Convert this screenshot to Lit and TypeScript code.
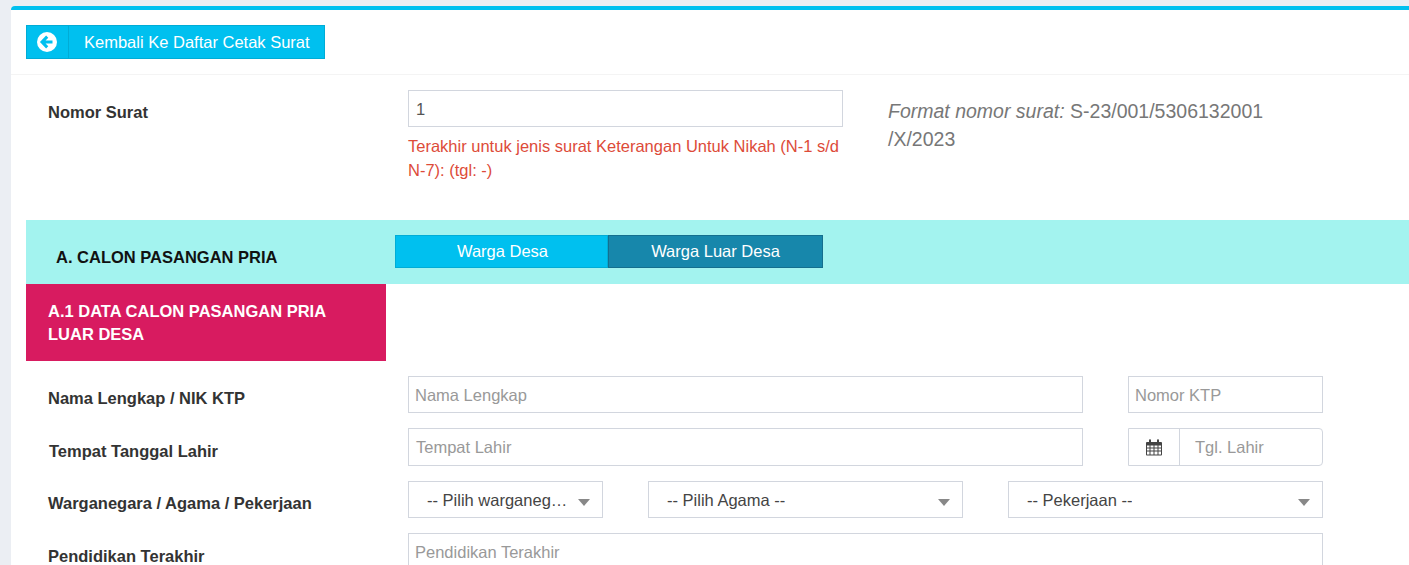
import { LitElement, html, css } from "lit";
import { customElement } from "lit/decorators.js";

const caret = html`<span class="caret"></span>`;

@customElement("app-root")
export class AppRoot extends LitElement {
  static styles = css`
    :host { display: block; height: 565px; overflow: hidden; background: #ebeef3; font: 16.5px/1.4 "Liberation Sans", Arial, sans-serif; color: #333; }
    * { box-sizing: border-box; }
    .card { margin: 6px 0 0 11px; background: #fff; border-top: 4px solid #00c0ef; border-top-left-radius: 4px; height: 559px; overflow: hidden; }
    .head { height: 65px; padding: 15px 15px 0; border-bottom: 1px solid #f4f4f4; }
    .back { display: inline-flex; height: 34px; width: 299px; background: #00c0ef; border: 1px solid #00acd6; color: #fff; align-items: center; }
    .back .ic { width: 42px; height: 100%; display: flex; align-items: center; justify-content: center; border-right: 1px solid #00acd6; padding-right: 1px; }
    .back .tx { padding: 1px 0 0 15px; }
    .nomor { display: grid; grid-template-columns: 360px 435px 1fr; padding: 15px 0 0 37px; height: 145px; }
    .nomor .lbl { padding-top: 11px; }
    .lbl { font-weight: 700; color: #333; line-height: 22px; }
    .inp { height: 37px; border: 1px solid #d2d6de; padding: 2px 6px 0; display: flex; align-items: center; color: #999; background: #fff; white-space: nowrap; overflow: hidden; }
    .inp.val { color: #555; padding-left: 7px; }
    .err { color: #dd4b39; line-height: 24px; margin-top: 7px; }
    .hint { margin-left: 45px; font-size: 19.5px; line-height: 28px; color: #777; padding-top: 7px; width: 400px; }
    .band { margin-left: 15px; height: 64px; background: #a3f3ef; display: flex; }
    .band .title { width: 369px; padding: 25px 0 0 30px; font-weight: 700; color: #111; line-height: 24px; }
    .seg { display: flex; height: 33px; margin-top: 15px; color: #fff; }
    .seg div { display: flex; align-items: center; justify-content: center; border: 1px solid #00acd6; background: #00c0ef; width: 213px; padding: 0 0 0 2px; }
    .seg div + div { width: 215px; background: #1787ab; border-color: #146f8e; padding: 0; }
    .pink { margin-left: 15px; width: 360px; height: 77px; background: #d81b60; color: #fff; font-weight: 700; line-height: 23px; padding: 16px 22px 0; }
    .rows { padding: 15px 0 0 37px; display: flex; flex-direction: column; }
    .row { display: flex; align-items: flex-start; }
    .row .lbl { width: 360px; flex: none; padding-top: 11px; }
    .f { flex: none; }
    .r1 { height: 52px; }
    .r2 { height: 53px; }
    .r2 .lbl { padding: 12px 0 0 1px; }
    .r3 { height: 52px; }
    .r4 .lbl { padding-top: 12px; }
    .ig { width: 195px; height: 38px; margin-left: 45px; border: 1px solid #d2d6de; border-radius: 0 4px 4px 0; display: flex; color: #999; }
    .ig .cal { width: 51px; display: flex; align-items: center; justify-content: center; border-right: 1px solid #d2d6de; }
    .ig .ph { padding: 2px 0 0 15px; display: flex; align-items: center; }
    .sel { height: 37px; border: 1px solid #d2d6de; display: flex; align-items: center; color: #444; position: relative; padding: 2px 32px 0 18px; white-space: nowrap; margin-left: 45px; }
    .sel.first { margin-left: 0; }
    .sel .t { overflow: hidden; text-overflow: ellipsis; }
    .caret { position: absolute; right: 12px; top: 17px; width: 0; height: 0; border-left: 6px solid transparent; border-right: 6px solid transparent; border-top: 7px solid #888; }
  `;

  render() {
    return html`<div class="card">
      <div class="head">
        <div class="back">
          <span class="ic"><svg width="20" height="20" viewBox="0 0 20 20"><circle cx="10" cy="10" r="10" fill="#fff"/><path d="M10.2 4.6 5 10l5.200 5.400M5.400 10H15.500" fill="none" stroke="#00c0ef" stroke-width="3"/></svg></span>
          <span class="tx">Kembali Ke Daftar Cetak Surat</span>
        </div>
      </div>
      <div class="nomor">
        <div class="lbl">Nomor Surat</div>
        <div>
          <div class="inp val">1</div>
          <div class="err">Terakhir untuk jenis surat Keterangan Untuk Nikah (N-1 s/d N-7): (tgl: -)</div>
        </div>
        <div class="hint"><i>Format nomor surat:</i> S-23/001/5306132001 /X/2023</div>
      </div>
      <div class="band">
        <div class="title">A. CALON PASANGAN PRIA</div>
        <div class="seg"><div>Warga Desa</div><div>Warga Luar Desa</div></div>
      </div>
      <div class="pink">A.1 DATA CALON PASANGAN PRIA LUAR DESA</div>
      <div class="rows">
        <div class="row r1">
          <div class="lbl">Nama Lengkap / NIK KTP</div>
          <div class="inp f" style="width:675px">Nama Lengkap</div>
          <div class="inp f" style="width:195px;margin-left:45px">Nomor KTP</div>
        </div>
        <div class="row r2">
          <div class="lbl">Tempat Tanggal Lahir</div>
          <div class="inp f" style="width:675px;height:38px;padding-left:7px">Tempat Lahir</div>
          <div class="ig">
            <span class="cal"><svg width="16" height="17" viewBox="0 0 16 17"><path fill="#444" fill-rule="evenodd" d="M1 3h2V1.500C3 .7 3.500.3 4 .3s1 .4 1 1.200V3h6V1.500c0-.8.500-1.200 1-1.200s1 .4 1 1.200V3h2c.5 0 1 .5 1 1v11.500c0 .5-.5 1-1 1H1c-.5 0-1-.5-1-1V4c0-.5.500-1 1-1zM1 6.500v2h2.500v-2zM4.500 6.500v2h3v-2zM8.500 6.500v2h3v-2zM12.500 6.500v2H15v-2zM1 9.500v2h2.500v-2zM4.500 9.500v2h3v-2zM8.500 9.500v2h3v-2zM12.500 9.500v2H15v-2zM1 12.500v2.900h2.500v-2.900zM4.500 12.500v2.900h3v-2.900zM8.500 12.500v2.900h3v-2.900zM12.500 12.500v2.900H15v-2.900z"/></svg></span>
            <span class="ph">Tgl. Lahir</span>
          </div>
        </div>
        <div class="row r3">
          <div class="lbl">Warganegara / Agama / Pekerjaan</div>
          <div class="sel first f" style="width:195px"><span class="t">-- Pilih warganegara --</span>${caret}</div>
          <div class="sel f" style="width:315px"><span class="t">-- Pilih Agama --</span>${caret}</div>
          <div class="sel f" style="width:315px"><span class="t">-- Pekerjaan --</span>${caret}</div>
        </div>
        <div class="row r4">
          <div class="lbl">Pendidikan Terakhir</div>
          <div class="inp f" style="width:915px">Pendidikan Terakhir</div>
        </div>
      </div>
    </div>`;
  }
}
